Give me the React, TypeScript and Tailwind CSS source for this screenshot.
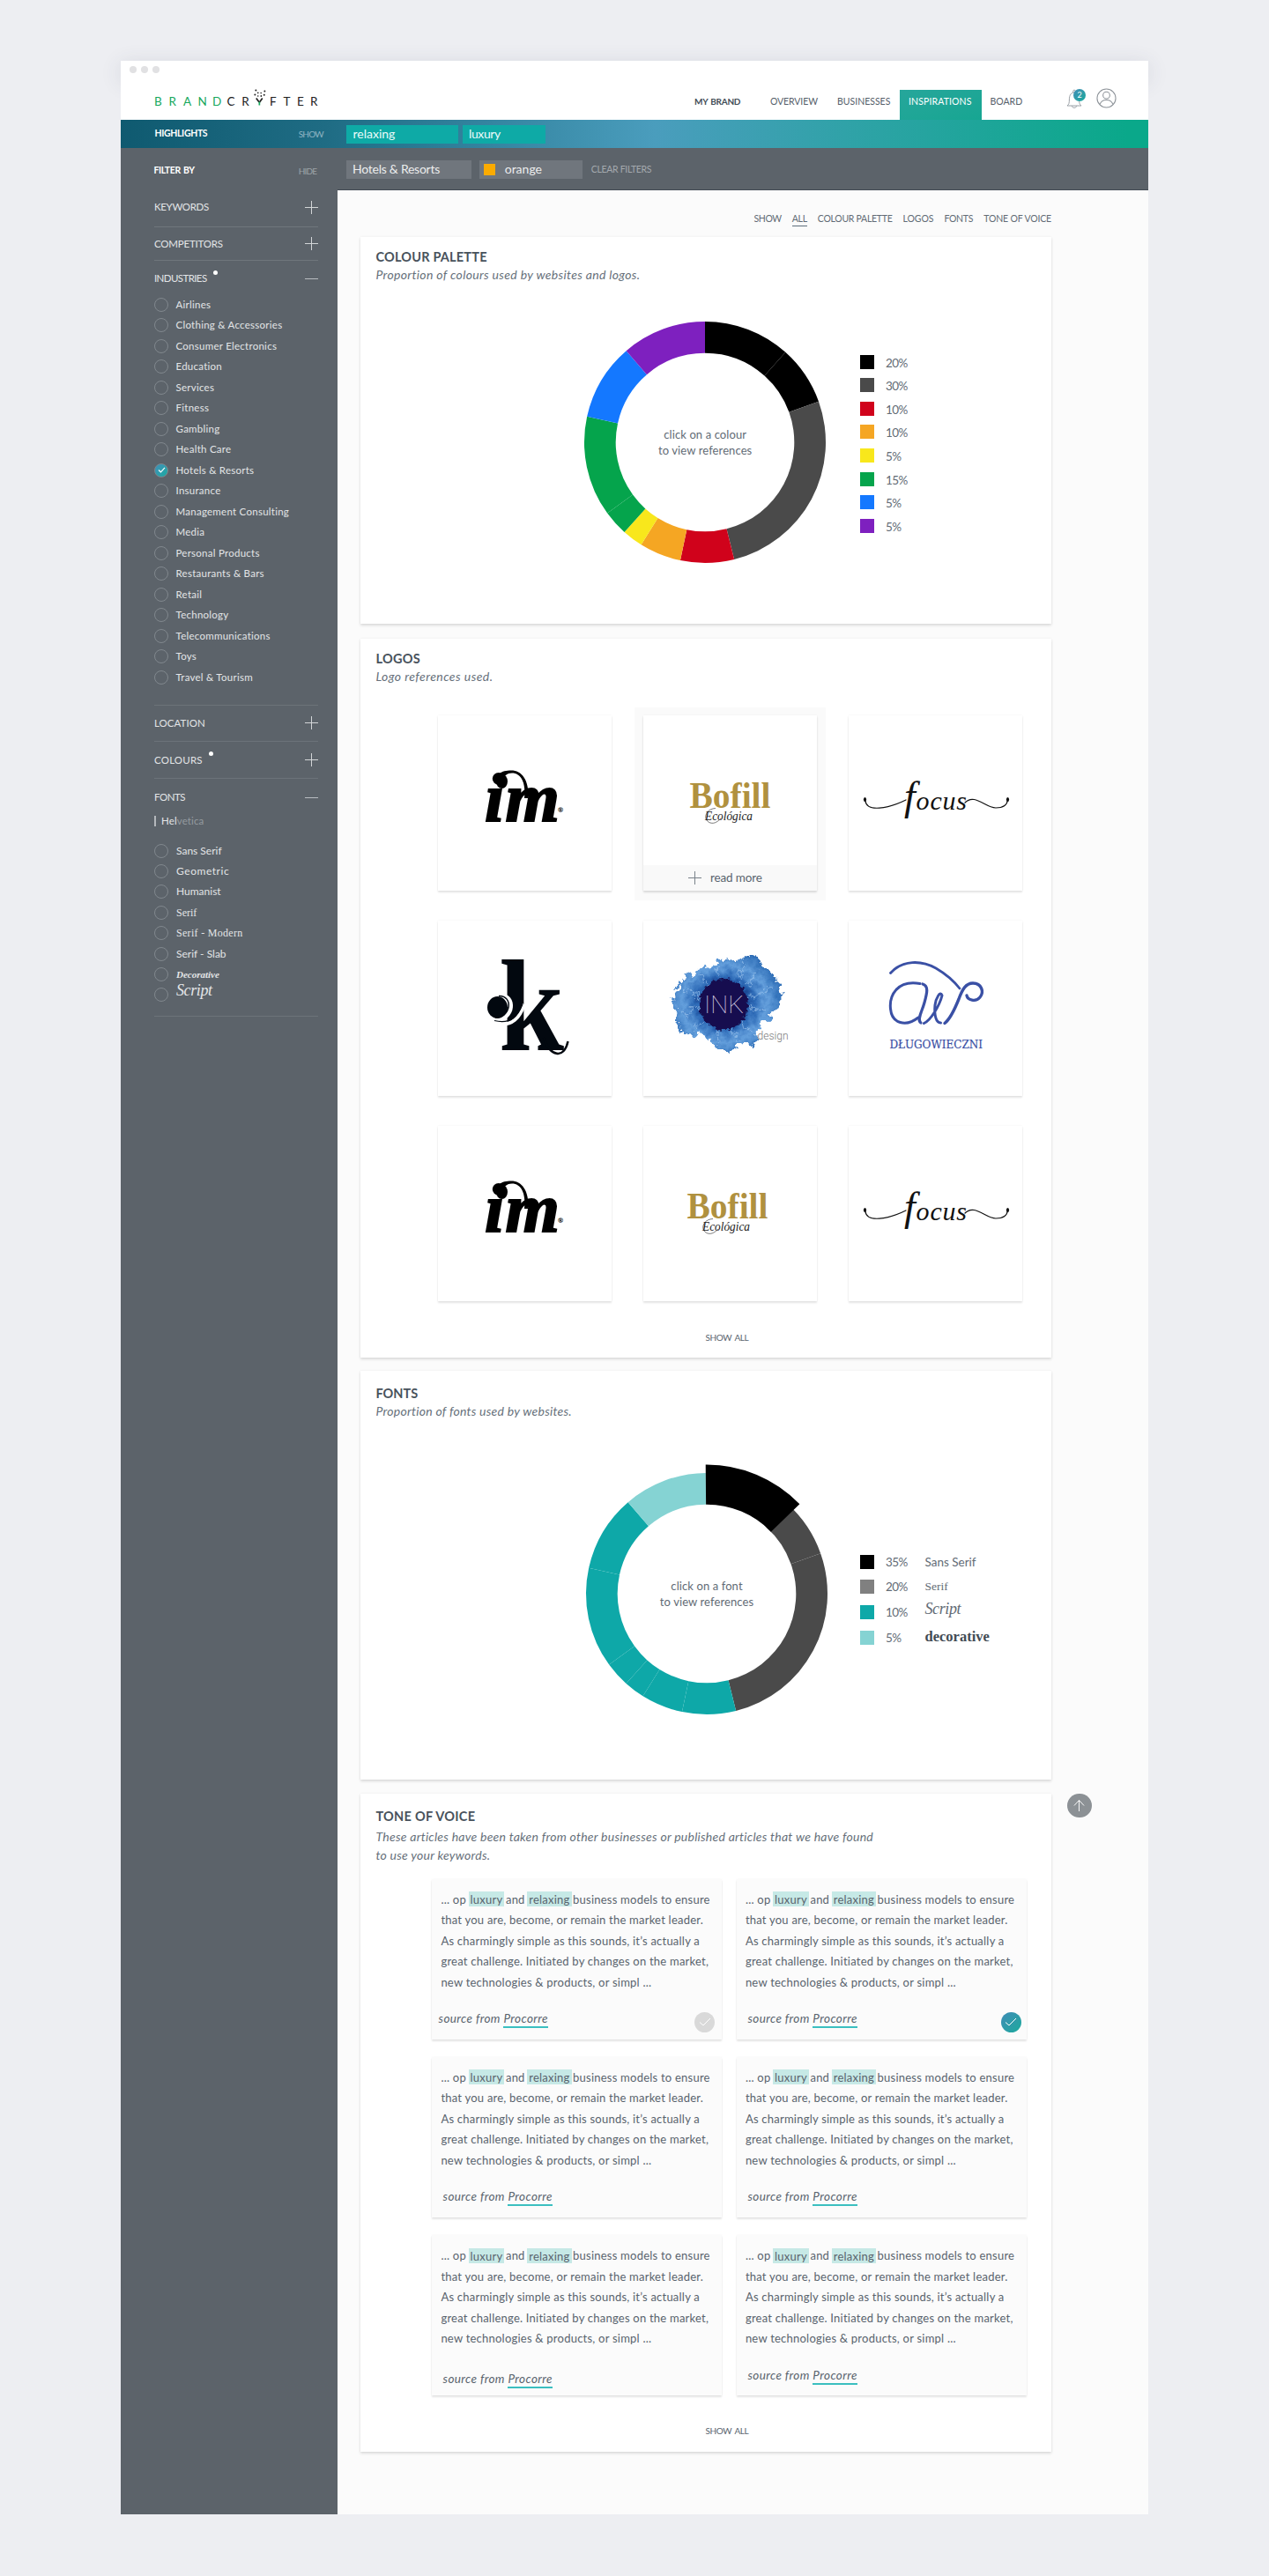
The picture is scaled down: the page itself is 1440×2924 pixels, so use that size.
import React from "react";

type Slice = { from: number; to: number; color: string; r?: number };

/* ---------- small shared pieces ---------- */

function Plus({ className = "" }: { className?: string }) {
  return (
    <svg viewBox="0 0 15 15" className={"h-[15px] w-[15px] shrink-0 " + className} fill="none" stroke="currentColor" strokeWidth="1">
      <path d="M7.5 0v15M0 7.5h15" />
    </svg>
  );
}

function Minus({ className = "" }: { className?: string }) {
  return (
    <svg viewBox="0 0 15 15" className={"h-[15px] w-[15px] shrink-0 " + className} fill="none" stroke="currentColor" strokeWidth="1">
      <path d="M0 7.5h15" />
    </svg>
  );
}

function Radio({ checked = false }: { checked?: boolean }) {
  if (checked) {
    return (
      <span className="flex h-4 w-4 shrink-0 items-center justify-center rounded-full border border-[#7f868c] bg-gradient-to-br from-[#3f8fb8] to-[#12aaa0]">
        <svg viewBox="0 0 10 8" className="h-[7px] w-[9px]" fill="none" stroke="#fff" strokeWidth="1.3">
          <path d="M1 4l2.8 2.8L9 1" />
        </svg>
      </span>
    );
  }
  return <span className="h-4 w-4 shrink-0 rounded-full border border-[#81888e]" />;
}

/* ---------- header ---------- */

function BrandMark() {
  return (
    <svg viewBox="0 0 16 20" className="mt-[-7px] h-[20px] w-[16.3px]" fill="#222">
      <path d="M2.6 10.400l3.400 4.600M9.600 10.400L6.400 15" stroke="#222" strokeWidth="1.7" fill="none" />
      <path d="M6.2 14.5v4" stroke="#17a85c" strokeWidth="1.7" />
      <circle cx="1.2" cy="6.6" r="1" />
      <circle cx="2.2" cy="1.6" r="1" />
      <circle cx="4.6" cy="4.4" r=".8" />
      <circle cx="8" cy="4.6" r=".8" />
      <circle cx="12.2" cy="2.4" r="1" />
      <circle cx="11.6" cy="6.8" r="1" />
      <circle cx="4.6" cy="8" r=".8" />
      <circle cx="8.2" cy="8" r=".9" />
    </svg>
  );
}

function Logo() {
  return (
    <div className="flex h-[14px] text-[13.5px] leading-[14px]">
      {["B", "R", "A", "N", "D"].map((l) => (
        <span key={l} className="w-[16.5px] text-[#17a85c]">{l}</span>
      ))}
      <span className="w-[16.7px] text-[#222]">C</span>
      <span className="w-[14px] text-[#222]">R</span>
      <BrandMark />
      <span className="ml-[1.500px] w-[15.600px] text-[#222]">F</span>
      <span className="w-[15.400px] text-[#222]">T</span>
      <span className="w-[15px] text-[#222]">E</span>
      <span className="text-[#222]">R</span>
    </div>
  );
}

function Header() {
  return (
    <header className="bg-white">
      <div className="h-[20px] shadow-[0_4px_24px_rgba(60,65,90,0.14)]">
        <div className="flex gap-[5px] pl-[9.5px] pt-[6px]">
          <span className="h-2 w-2 rounded-full bg-[#e1e1e3]" />
          <span className="h-2 w-2 rounded-full bg-[#e1e1e3]" />
          <span className="h-2 w-2 rounded-full bg-[#e1e1e3]" />
        </div>
      </div>
      <div className="relative flex h-[47px] bg-white">
        <div className="w-[651px] pl-[38px] pt-[19px]">
          <Logo />
        </div>
        <nav className="flex pt-[13px] text-[10.5px] leading-[26px] text-[#56606a]">
          <span className="w-[86px] text-[10px] font-bold tracking-[-0.25px] [word-spacing:1px] text-[#434d57]">MY BRAND</span>
          <span className="w-[76px] tracking-[-0.1px]">OVERVIEW</span>
          <span className="w-[70.5px]">BUSINESSES</span>
          <span className="w-[93px] bg-gradient-to-br from-[#26a69b] to-[#16a692] pl-[10.5px] tracking-[0.12px] text-white">INSPIRATIONS</span>
          <span className="w-[96.5px] pl-[10px]">BOARD</span>
        </nav>
        <div className="relative w-[34px] pt-[12px]">
          <svg viewBox="0 0 18 22" className="h-[22px] w-[18px]" fill="none" stroke="#9aa0a6" strokeWidth="1">
            <path d="M1 19h16c-2-1.500-2.400-3-2.400-7 0-5-2-8-5.600-8S3.400 7 3.400 12c0 4-.4 5.500-2.400 7z" />
            <path d="M6.300 19.200c.3 2.800 5.100 2.800 5.400 0M7.800 4V2.200c0-1.400 2.400-1.400 2.400 0V4" />
          </svg>
          <span className="absolute left-[8px] top-[12px] h-[14px] w-[14px] rounded-full bg-gradient-to-br from-[#3f8db6] to-[#12aa9c] text-center text-[9px] leading-[14px] text-white">2</span>
        </div>
        <svg viewBox="0 0 24 24" className="mt-[11px] h-[23px] w-[23px]" fill="none" stroke="#8d9399" strokeWidth="1.100">
          <circle cx="12" cy="12" r="11" />
          <circle cx="12" cy="8.500" r="4" />
          <path d="M4.300 19.500c1-4 4-5.500 7.700-5.500s6.700 1.500 7.700 5.500" />
        </svg>
      </div>
    </header>
  );
}

function HighlightsBar() {
  return (
    <div className="relative flex h-[32px] items-center bg-[linear-gradient(90deg,#0f5a70_0%,#1f6c84_20%,#4a9dbd_52%,#2ba3a4_74%,#0aa88a_98%)]">
      <div className="flex w-[256px] items-center pl-[38.5px]">
        <b className="w-[163.2px] text-[10.5px] tracking-[-0.35px] text-white">HIGHLIGHTS</b>
        <span className="text-[10px] tracking-[-0.8px] text-[#8fb4c2]">SHOW</span>
      </div>
      <div className="flex gap-[5.5px] text-[14px] leading-[19px] text-[#eafafa]">
        <span className="h-[21px] w-[126.5px] bg-[#0eaaa6] pl-[7.5px]">relaxing</span>
        <span className="h-[21px] w-[94px] bg-[#0eaaa6] pl-[7px] tracking-[-0.4px]">luxury</span>
      </div>
    </div>
  );
}

function FilterBar() {
  return (
    <div className="flex h-[48px] bg-[#5c636a]">
      <div className="flex w-[246px] pl-[37.5px] pt-[18px] leading-[14px]">
        <b className="w-[164.2px] text-[10.5px] tracking-[-0.4px] text-white [word-spacing:1px]">FILTER BY</b>
        <span className="pt-[1px] text-[10px] tracking-[-0.8px] text-[#9da3a8]">HIDE</span>
      </div>
      <div className="flex flex-1 border-b border-[#434b54] pl-[10px] pt-[14px] text-[14px] leading-[20px] text-[#eceded]">
        <span className="h-[21px] w-[142px] bg-[#70767d] pl-[7px] tracking-[-0.25px]">Hotels &amp; Resorts</span>
        <span className="ml-[8.5px] flex h-[21px] w-[117px] bg-[#70767d] pl-[5.5px]">
          <i className="mr-[10.7px] mt-[4px] h-[13px] w-[13px] bg-[#fbab00]" />
          orange
        </span>
        <span className="ml-[10.3px] text-[10.5px] tracking-[-0.33px] text-[#a4a9ae]">CLEAR FILTERS</span>
      </div>
    </div>
  );
}

/* ---------- sidebar ---------- */

const industries = [
  "Airlines", "Clothing & Accessories", "Consumer Electronics", "Education", "Services", "Fitness",
  "Gambling", "Health Care", "Hotels & Resorts", "Insurance", "Management Consulting", "Media",
  "Personal Products", "Restaurants & Bars", "Retail", "Technology", "Telecommunications", "Toys",
  "Travel & Tourism",
];

const fontFilters: [string, string][] = [
  ["Sans Serif", "text-[12px]"],
  ["Geometric", "text-[12px] tracking-[0.55px]"],
  ["Humanist", "text-[12px]"],
  ["Serif", "text-[12px] [font-family:'Liberation_Serif',serif]"],
  ["Serif - Modern", "text-[12px] tracking-[0.3px] [font-family:'Liberation_Serif',serif]"],
  ["Serif - Slab", "text-[12px]"],
  ["Decorative", "font-bold italic text-[11px] [font-family:'Liberation_Serif',serif]"],
  ["Script", "mt-[-10px] italic text-[18px] leading-[20px] tracking-[-0.4px] [font-family:'Liberation_Serif',serif]"],
];

function GroupTitle({ label, open = false, dot = false, className = "" }: { label: string; open?: boolean; dot?: boolean; className?: string }) {
  return (
    <div className={"flex items-center justify-between text-[11.5px] " + className}>
      <span className="flex items-center">
        {label}
        {dot && <i className="mb-[13px] ml-[7px] h-[5px] w-[5px] rounded-full bg-white" />}
      </span>
      {open ? <Minus className="text-[#b9bdc1]" /> : <Plus className="text-[#d2d5d7]" />}
    </div>
  );
}

function Sidebar() {
  return (
    <aside className="w-[246px] bg-[#5c636a] pl-[38px] pr-[22px] text-[#e3e5e7]">
      <GroupTitle label="KEYWORDS" className="h-[42px] border-b border-[#70767c] pb-[3px] tracking-[-0.35px]" />
      <GroupTitle label="COMPETITORS" className="h-[38px] border-b border-[#70767c] tracking-[-0.2px]" />
      <div className="border-b border-[#6c7379] pb-[19.5px]">
        <GroupTitle label="INDUSTRIES" open dot className="h-[38px] pt-[2px] tracking-[-0.6px]" />
        {industries.map((name) => (
          <div key={name} className="flex h-[23.5px] items-center text-[11.5px] tracking-[0.26px]">
            <Radio checked={name === "Hotels & Resorts"} />
            <span className="ml-[8.5px] pb-px">{name}</span>
          </div>
        ))}
      </div>
      <GroupTitle label="LOCATION" className="h-[40.5px] border-b border-[#6c7379] tracking-[0.05px]" />
      <GroupTitle label="COLOURS" dot className="h-[42.5px] border-b border-[#6c7379] tracking-[0.2px]" />
      <div className="border-b border-[#6c7379] pb-[12px]">
        <GroupTitle label="FONTS" open className="h-[42px] tracking-[-0.5px]" />
        <div className="flex h-[12px] items-center text-[11.5px] tracking-[0.13px]">
          <i className="mr-[6.5px] h-[12px] w-[1.5px] bg-[#b4b8bc]" />
          Hel<span className="text-[#959ba0]">vetica</span>
        </div>
        <div className="mt-4">
          {fontFilters.map(([name, cls]) => (
            <div key={name} className="flex h-[23.4px] items-center">
              <Radio />
              <span className={"ml-[9px] " + cls}>{name}</span>
            </div>
          ))}
        </div>
      </div>
    </aside>
  );
}

/* ---------- cards ---------- */

function Card({ title, titleClass = "", subtitle, subtitleClass = "", className, children }: {
  title: string; titleClass?: string; subtitle: React.ReactNode; subtitleClass?: string; className: string; children: React.ReactNode;
}) {
  return (
    <section className={"w-[784px] shrink-0 bg-white shadow-[0_2px_3px_rgba(0,0,0,0.12),0_0_3px_rgba(0,0,0,0.05)] " + className}>
      <h2 className={"pl-[17.5px] text-[14.5px] font-bold leading-[20px] text-[#48525c] " + titleClass}>{title}</h2>
      <p className={"pl-[17.5px] text-[14px] italic leading-[20px] tracking-[0.33px] text-[#66707a] " + subtitleClass}>{subtitle}</p>
      {children}
    </section>
  );
}

function arc({ from, to, r = 137 }: Slice, inner: number) {
  const at = (deg: number, rad: number) => {
    const a = (deg * Math.PI) / 180;
    return `${(160 + rad * Math.sin(a)).toFixed(2)} ${(160 - rad * Math.cos(a)).toFixed(2)}`;
  };
  const large = to - from > 180 ? 1 : 0;
  return `M${at(from, r)}A${r} ${r} 0 ${large} 1 ${at(to, r)}L${at(to, inner)}A${inner} ${inner} 0 ${large} 0 ${at(from, inner)}Z`;
}

function Donut({ slices, first, className = "" }: { slices: Slice[]; first: string; className?: string }) {
  return (
    <div className={"relative h-[320px] w-[320px] shrink-0 " + className}>
      <svg viewBox="0 0 320 320" className="h-full w-full">
        {slices.map((s) => (
          <path key={s.from} d={arc(s, 101.3)} fill={s.color} />
        ))}
      </svg>
      <div className="absolute inset-x-0 top-[142px] text-center text-[13px] leading-[18px] tracking-[0.1px] text-[#626b75]">
        {first}
        <br />
        to view references
      </div>
    </div>
  );
}

const colourSlices: Slice[] = [
  { from: 0, to: 41.8, color: "#000" },
  { from: 41.8, to: 70.3, color: "#000" },
  { from: 70.3, to: 166, color: "#4a4a4a" },
  { from: 166, to: 191.8, color: "#d0021b" },
  { from: 191.8, to: 211.9, color: "#f5a623" },
  { from: 211.9, to: 221.9, color: "#f8e71c" },
  { from: 221.9, to: 234, color: "#05a44c" },
  { from: 234, to: 282.3, color: "#05a44c" },
  { from: 282.3, to: 319.3, color: "#1478ff" },
  { from: 319.3, to: 360, color: "#7e20bf" },
];

const fontSlices: Slice[] = [
  { from: 41.8, to: 70.5, color: "#4a4a4a" },
  { from: 70.5, to: 166, color: "#4a4a4a" },
  { from: 166, to: 191.8, color: "#0ea8a8" },
  { from: 191.8, to: 211.9, color: "#0ea8a8" },
  { from: 211.9, to: 221.9, color: "#0ea8a8" },
  { from: 221.9, to: 234, color: "#0ea8a8" },
  { from: 234, to: 282.3, color: "#0ea8a8" },
  { from: 282.3, to: 319.3, color: "#0ea8a8" },
  { from: 319.3, to: 359.5, color: "#85d3d3" },
  { from: -0.5, to: 46, color: "#000", r: 146.5 },
];

const colourLegend: [string, string][] = [
  ["bg-black", "20%"], ["bg-[#4a4a4a]", "30%"], ["bg-[#d0021b]", "10%"], ["bg-[#f5a623]", "10%"],
  ["bg-[#f8e71c]", "5%"], ["bg-[#05a44c]", "15%"], ["bg-[#1478ff]", "5%"], ["bg-[#7e20bf]", "5%"],
];

const fontLegend: [string, string, string, string][] = [
  ["bg-black", "35%", "Sans Serif", "text-[13.5px]"],
  ["bg-[#808080]", "20%", "Serif", "text-[13.5px] [font-family:'Liberation_Serif',serif]"],
  ["bg-[#0ea8a8]", "10%", "Script", "text-[18px] italic -mt-[4px] tracking-[-0.4px] [font-family:'Liberation_Serif',serif]"],
  ["bg-[#85d3d3]", "5%", "decorative", "text-[16.5px] font-bold -mt-[1px] text-[#424b54] [font-family:'Liberation_Serif',serif]"],
];

/* ---------- logo references ---------- */

function ImLogo() {
  return (
    <svg viewBox="497 812 197 199" className="h-full w-full">
      <text x="550" y="931.5" fontSize="79" fontWeight="700" fontStyle="italic" fontFamily="Liberation Serif, serif" textLength="85" stroke="#000" strokeWidth="2">im</text>
      <ellipse cx="569.5" cy="887" rx="6.5" ry="8" />
      <path d="M563 889C561 879 569 874.500 580 874.500C592 874.500 600.500 885 599.500 906L595 906C597 888 591 877.500 581 877.500C574 877.500 571 882 573 886Z" />
      <text x="633" y="922" fontSize="7.500" fontWeight="700" fontFamily="Lato, sans-serif">®</text>
    </svg>
  );
}

function BofillLogo({ shift = false }: { shift?: boolean }) {
  return (
    <svg viewBox={shift ? "733 812 197 199" : "730 812 197 199"} className="h-full w-full">
      <text x="782.5" y="917" fontSize="43" fontWeight="700" fill="#b0913f" fontFamily="Liberation Serif, serif" textLength="92" lengthAdjust="spacingAndGlyphs">Bofill</text>
      <text x="800" y="930.5" fontSize="14.5" fontStyle="italic" fill="#222" fontFamily="Liberation Serif, serif" textLength="54" lengthAdjust="spacingAndGlyphs">Ecológica</text>
      <path d="M812 917.500C800 918 797 931 806 934C811 935.500 815 932 818 929" fill="none" stroke="#222" strokeWidth="0.6" />
    </svg>
  );
}

function FocusLogo() {
  return (
    <svg viewBox="963 812 197 199" className="h-full w-full">
      <g fill="none" stroke="#111" strokeLinecap="round">
        <path d="M982 909C983 922 1008 918 1028 908" strokeWidth="1.2" />
        <path d="M1095 911C1106 900 1118 917 1130 917C1140 917 1143 912 1143.500 908" strokeWidth="1.2" />
      </g>
      <ellipse cx="981.5" cy="907.5" rx="1.6" ry="2.6" fill="#111" />
      <ellipse cx="1143.5" cy="907.5" rx="1.6" ry="2.6" fill="#111" />
      <text x="1026" y="919" fontSize="30" fontStyle="italic" fill="#111" fontFamily="Liberation Serif, serif" textLength="71">
        <tspan fontSize="46">f</tspan>ocus
      </text>
    </svg>
  );
}

function KLogo() {
  return (
    <svg viewBox="497 1045 197 199" className="h-full w-full">
      <text x="566" y="1192" fontSize="148" fontWeight="700" fill="#02080f" fontFamily="Liberation Serif, serif" textLength="74" lengthAdjust="spacingAndGlyphs">k</text>
      <path d="M562 1128C590 1122 588 1162 560 1160Z" fill="#fff" />
      <path d="M562 1161.500C582 1166 590 1154 595 1140" fill="none" stroke="#fff" strokeWidth="4" />
      <path d="M561 1158.500C580 1163 588 1153 593 1140" fill="none" stroke="#02080f" strokeWidth="1.2" />
      <ellipse cx="564.5" cy="1143.500" rx="11.500" ry="12.500" fill="#02080f" />
      <path d="M566 1130.500C583 1130 580 1155 562 1155" fill="none" stroke="#02080f" strokeWidth="1.5" />
      <path d="M617 1178C624 1199 640 1203 644.500 1182" fill="none" stroke="#02080f" strokeWidth="2.500" />
    </svg>
  );
}

function InkLogo() {
  return (
    <svg viewBox="730 1045 197 199" className="h-full w-full">
      <defs>
        <radialGradient id="inkBlue" cx="0.47" cy="0.5" r="0.55">
          <stop offset="0.3" stopColor="#123a86" />
          <stop offset="0.5" stopColor="#2f6cb8" />
          <stop offset="0.72" stopColor="#649fdc" />
          <stop offset="1" stopColor="#2a6ab4" />
        </radialGradient>
        <filter id="inkEdge" x="-20%" y="-20%" width="140%" height="140%">
          <feTurbulence type="fractalNoise" baseFrequency="0.13" numOctaves="4" seed="7" result="n" />
          <feDisplacementMap in="SourceGraphic" in2="n" scale="16" xChannelSelector="R" yChannelSelector="G" />
        </filter>
        <filter id="inkCore" x="-20%" y="-20%" width="140%" height="140%">
          <feTurbulence type="fractalNoise" baseFrequency="0.25" numOctaves="2" seed="3" result="n" />
          <feDisplacementMap in="SourceGraphic" in2="n" scale="8" xChannelSelector="R" yChannelSelector="G" />
        </filter>
      </defs>
      <g filter="url(#inkEdge)">
        <path fill="url(#inkBlue)" d="M768 1122C772 1112 780 1106 788 1104C794 1098 802 1096 808 1098C814 1088 826 1086 842 1090C846 1082 858 1080 862 1092C872 1100 882 1108 884 1120C890 1132 884 1140 880 1148C874 1154 866 1160 862 1166C856 1172 860 1186 856 1188C848 1182 844 1180 838 1184C834 1196 824 1196 818 1190C808 1190 808 1178 800 1176C790 1172 774 1176 770 1166C762 1156 768 1150 768 1144C762 1136 764 1128 768 1122Z" />
        <g fill="none" stroke="#a9cdf2" strokeWidth="1.5" opacity="0.55">
          <path d="M845 1092l-8 20M862 1102l-16 18M876 1122l-26 10M870 1148l-20-4M852 1172l-12-14M836 1182l-6-16M814 1182l2-14M788 1168l14-12M774 1150l22-6M774 1124l24 8M794 1106l12 14M814 1098l4 14" />
        </g>
      </g>
      <ellipse cx="821" cy="1140" rx="28" ry="29" fill="#170d4f" filter="url(#inkCore)" />
      <text x="799" y="1150" fontSize="28" fontWeight="100" fill="#d9cfe0" fontFamily="Roboto, sans-serif" textLength="45" lengthAdjust="spacingAndGlyphs">INK</text>
      <text x="859.5" y="1180" fontSize="13" fontWeight="300" fill="#777" fontFamily="Roboto, sans-serif" textLength="35" lengthAdjust="spacingAndGlyphs">design</text>
    </svg>
  );
}

function AwLogo() {
  return (
    <svg viewBox="963 1045 197 199" className="h-full w-full">
      <g fill="none" stroke="#3a50a5" strokeLinecap="round">
        <path d="M1010.500 1104.500C1024 1089 1046 1090 1062 1099C1074 1106 1082 1113 1089 1122" strokeWidth="2.800" />
        <path d="M1044 1116.500C1018 1112 1009 1130 1010.500 1145C1012 1162 1028 1166 1042 1155" strokeWidth="3" />
        <path d="M1047 1117C1054 1119 1052 1127 1049 1138C1046 1149 1040 1158 1045 1161" strokeWidth="3.200" />
        <path d="M1048.500 1161.500C1056 1158 1066 1142 1069 1130C1067 1124 1062 1133 1061 1141C1060 1152 1062 1161 1067.500 1161" strokeWidth="3" />
        <path d="M1072 1161.500C1079 1156 1084 1144 1088 1134C1092 1123 1096 1116 1104 1116C1114 1116 1117 1126 1112 1132C1107 1138 1098 1135 1097 1130" strokeWidth="3.400" />
      </g>
      <text x="1009.5" y="1190" fontSize="13" fill="#3a50a5" stroke="#3a50a5" strokeWidth="0.2" fontFamily="DejaVu Serif, serif" textLength="105.5" lengthAdjust="spacingAndGlyphs">DŁUGOWIECZNI</text>
    </svg>
  );
}

function Tile({ children, hover = false }: { children: React.ReactNode; hover?: boolean }) {
  return (
    <div className={"relative h-[199px] w-[197px] bg-white " + (hover ? "shadow-[0_2px_2px_rgba(0,0,0,0.12),0_0_2px_rgba(0,0,0,0.06),0_1px_0_10px_#fafafa]" : "shadow-[0_2px_2px_rgba(0,0,0,0.10),0_0_2px_rgba(0,0,0,0.06)]")}>
      {children}
      {hover && (
        <div className="absolute inset-x-0 bottom-0 flex h-[29px] items-center bg-[#f9f9f9] pl-[51px] text-[13.5px] text-[#5a646e]">
          <Plus className="mr-[10px] text-[#79828a]" />
          <span className="tracking-[-0.15px]">read more</span>
        </div>
      )}
    </div>
  );
}

/* ---------- tone of voice ---------- */

function Mark({ children }: { children: string }) {
  return <mark className="-ml-[1px] -mr-[2px] bg-[#c6e9e6] px-[2px] py-[0.5px] text-inherit">{children}</mark>;
}

function Article({ source, badge }: { source: string; badge?: "off" | "on" }) {
  return (
    <article className="relative h-[182px] w-[329px] bg-[#fbfbfb] pt-[12px] shadow-[0_2px_2px_rgba(0,0,0,0.10),0_0_2px_rgba(0,0,0,0.05)]">
      <p className="whitespace-nowrap pl-[10.4px] text-[13px] leading-[23.5px] tracking-[0.23px] text-[#59636d]">
        ... op <Mark>luxury</Mark> and <Mark>relaxing</Mark> business models to ensure
        <br />
        that you are, become, or remain the market leader.
        <br />
        As charmingly simple as this sounds, it’s actually a
        <br />
        great challenge. Initiated by changes on the market,
        <br />
        new technologies &amp; products, or simpl ...
      </p>
      <p className={"text-[13.5px] italic leading-[16px] tracking-[0.4px] text-[#59636d] " + source}>
        source from <span className="inline-block h-[19px] border-b-2 border-[#3bbfc0]">Procorre</span>
      </p>
      {badge && (
        <span className={"absolute bottom-[8px] flex h-[23px] w-[23px] items-center justify-center rounded-full " + (badge === "on" ? "right-[6px] bg-gradient-to-br from-[#3d8cb6] to-[#16aa9c]" : "right-[8px] bg-[#d9d9d9]")}>
          <svg viewBox="0 0 14 10" className="h-[10px] w-[14px]" fill="none" stroke="#fff" strokeWidth="1">
            <path d="M1 5.500l4 3.500 8-8" />
          </svg>
        </span>
      )}
    </article>
  );
}

function ShowAll({ className }: { className: string }) {
  return <div className={"pl-[391.5px] text-[10px] leading-[14px] tracking-[-0.4px] [word-spacing:1.5px] text-[#59636d] " + className}>SHOW ALL</div>;
}

/* ---------- page ---------- */

export default function App() {
  return (
    <div className="h-[2924px] w-[1440px] bg-[#edeef2] pl-[137px] pt-[69px] [font-family:Lato,sans-serif]">
      <div className="flex h-[2785px] w-[1166px] flex-col">
        <Header />
        <HighlightsBar />
        <FilterBar />
        <div className="flex flex-1">
          <Sidebar />
          <main className="w-[920px] bg-[#fbfbfb] pl-[26px]">
            <div className="flex h-[52.5px] w-[784px] items-start justify-end gap-[12px] pt-[25px] text-[10.5px] leading-[14px] tracking-[-0.28px] text-[#626b75]">
              <span className="tracking-[-0.4px]">SHOW</span>
              <span className="border-b border-[#5d6d7b] pb-px">ALL</span>
              <span>COLOUR PALETTE</span>
              <span className="tracking-[-0.05px]">LOGOS</span>
              <span>FONTS</span>
              <span className="tracking-[-0.15px]">TONE OF VOICE</span>
            </div>

            <Card title="COLOUR PALETTE" titleClass="tracking-[0.19px]" subtitle="Proportion of colours used by websites and logos." className="h-[439.5px] pt-[13px]">
              <div className="flex pl-[231.2px] pt-[20.7px]">
                <Donut slices={colourSlices} first="click on a colour" />
                <ul className="ml-[15.8px] mt-[60.5px]">
                  {colourLegend.map(([bg, pct], i) => (
                    <li key={i} className="flex h-[26.6px] text-[13.5px] leading-[18px] tracking-[-0.55px] text-[#626b75]">
                      <i className={"mr-[13px] h-4 w-4 " + bg} />
                      {pct}
                    </li>
                  ))}
                </ul>
              </div>
            </Card>

            <Card title="LOGOS" titleClass="tracking-[0.3px]" subtitle="Logo references used." subtitleClass="!tracking-[0.45px]" className="mt-[16.5px] h-[816px] pt-[13px]">
              <div className="ml-[88px] mt-[34.5px] grid grid-cols-[197px_197px_197px] gap-x-[36px] gap-y-[34px]">
                <Tile><ImLogo /></Tile>
                <Tile hover><BofillLogo /></Tile>
                <Tile><FocusLogo /></Tile>
                <Tile><KLogo /></Tile>
                <Tile><InkLogo /></Tile>
                <Tile><AwLogo /></Tile>
                <Tile><ImLogo /></Tile>
                <Tile><BofillLogo shift /></Tile>
                <Tile><FocusLogo /></Tile>
              </div>
              <ShowAll className="mt-[34px]" />
            </Card>

            <Card title="FONTS" subtitle="Proportion of fonts used by websites." subtitleClass="!tracking-[0.25px]" className="mt-[15.5px] h-[464px] pt-[15.5px]">
              <div className="flex pl-[233px] pt-[37.3px]">
                <Donut slices={fontSlices} first="click on a font" />
                <ul className="ml-[14px] mt-[116px]">
                  {fontLegend.map(([bg, pct, name, cls]) => (
                    <li key={name} className="flex h-[28.6px] text-[#626b75]">
                      <i className={"mr-[13px] h-4 w-4 " + bg} />
                      <span className="w-[44.5px] text-[13.5px] leading-[16px] tracking-[-0.55px]">{pct}</span>
                      <span className={"leading-[16px] " + cls}>{name}</span>
                    </li>
                  ))}
                </ul>
              </div>
            </Card>

            <div className="mt-[15.5px] flex items-start">
              <Card
                title="TONE OF VOICE"
                titleClass="tracking-[0.27px]"
                subtitle={
                  <>
                    These articles have been taken from other businesses or published articles that we have found
                    <br />
                    to use your keywords.
                  </>
                }
                subtitleClass="mt-[2px] whitespace-nowrap !leading-[21.3px] !tracking-[0.25px]"
                className="h-[747.5px] pt-[16.5px]"
              >
                <div className="ml-[81px] mt-[16px] grid grid-cols-[329px_329px] gap-x-[16.5px] gap-y-[20.3px]">
                  <Article source="mt-[20.5px] pl-[7.6px]" badge="off" />
                  <Article source="mt-[20.5px] pl-[13px]" badge="on" />
                  <Article source="mt-[20.5px] pl-[12.6px]" />
                  <Article source="mt-[20.5px] pl-[13px]" />
                  <Article source="mt-[25px] pl-[12.6px]" />
                  <Article source="mt-[21px] pl-[13px]" />
                </div>
                <ShowAll className="mt-[33px]" />
              </Card>
              <span className="ml-[18px] flex h-[27.5px] w-[27.5px] items-center justify-center rounded-full bg-[#8c9195]">
                <svg viewBox="0 0 14 16" className="h-[15px] w-[13px]" fill="none" stroke="#fff" strokeWidth="1">
                  <path d="M7 15V1.500M1 8l6-6.500L13 8" />
                </svg>
              </span>
            </div>
          </main>
        </div>
      </div>
    </div>
  );
}
